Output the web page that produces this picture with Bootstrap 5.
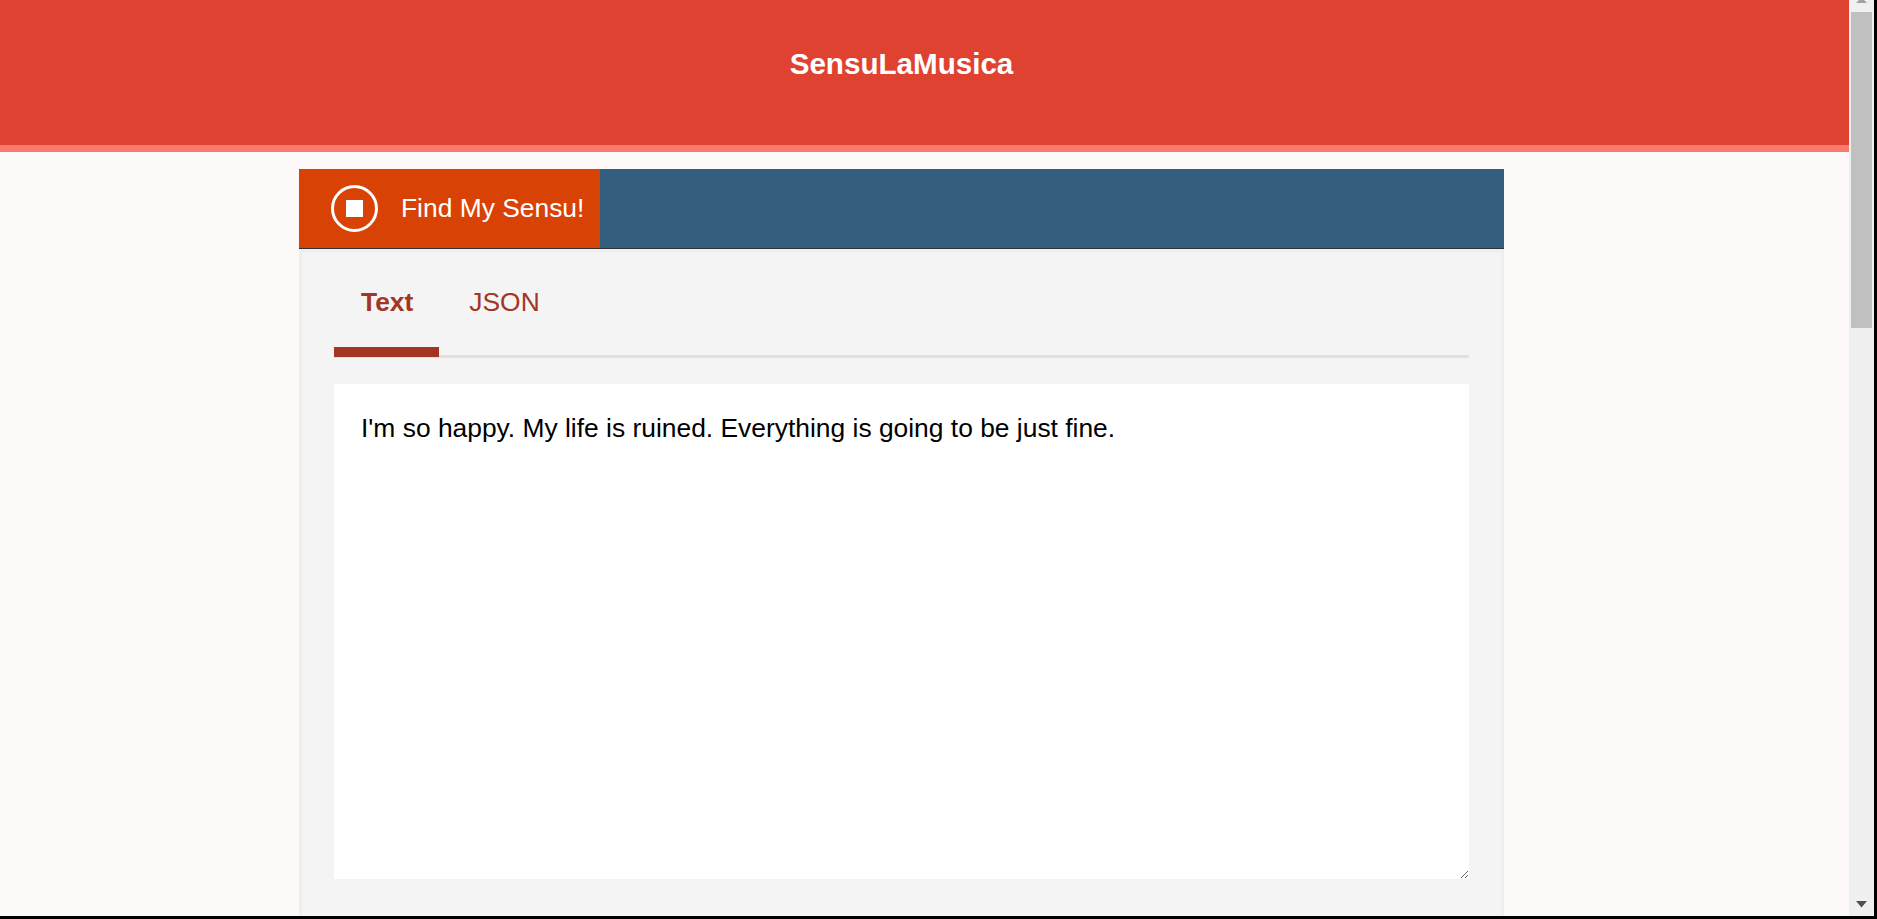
<!DOCTYPE html>
<html lang="en">

<head>
  <meta charset="UTF-8" />
  <title>SensuLaMusica</title>
  <link href="https://cdn.jsdelivr.net/npm/bootstrap@5.3.2/dist/css/bootstrap.min.css" rel="stylesheet" />
  <style>
    html,
    body {
      height: 100%;
      overflow: hidden;
    }

    body {
      background: #000;
      font-family: "Liberation Sans", Arial, sans-serif;
    }

    .shot {
      height: 916px;
      width: 1874px;
    }

    .page {
      width: 1849px;
      background: #fdf9f8;
      overflow: hidden;
    }

    .page-head {
      width: 1849px;
      height: 152px;
      padding: 47px 46px 0 0;
      background: #e04232;
      border-bottom: 7px solid #f87a6c;
    }

    .page-head h1 {
      margin: 0;
      font-size: 29.6px;
      font-weight: 700;
      line-height: 34px;
      color: #fff;
      text-align: center;
    }

    .wrap {
      width: 1803px;
      padding-top: 17px;
    }

    .box {
      width: 1205px;
    }

    .run-bar {
      height: 80px;
      background: #335e80;
      border-bottom: 1px solid #333;
    }

    .run-btn {
      width: 301px;
      height: 79px;
      padding: 0 0 0 32px;
      gap: 23px;
      border: 0;
      border-radius: 0;
      background: #d84205;
      color: #fff;
      font-size: 26.4px;
    }

    .run-btn:hover,
    .run-btn:active {
      background: #d84205;
      color: #fff;
    }

    .panel {
      height: 700px;
      padding: 0 32px;
      background: #f4f4f4;
      border: 3px solid #eee;
    }

    .tabs {
      height: 106px;
      border-bottom: 3px solid #e0e0e0;
    }

    .tabs .nav-link {
      height: 105px;
      padding: 35px 26px 0 27px;
      border-radius: 0;
      font-size: 26.4px;
      line-height: 30px;
      color: #a33524;
    }

    .tabs .nav-link.active {
      font-weight: 700;
      border-bottom: 10px solid #a33524;
    }

    .tabs .nav-item + .nav-item {
      margin-left: 3px;
    }

    .input-text {
      display: block;
      height: 495px;
      margin-top: 26px;
      padding: 29px 27px;
      border: 0;
      border-radius: 0;
      font-size: 26.4px;
      line-height: 30px;
      color: #000;
    }

    .fake-scroll {
      width: 25px;
      padding: 0 2px;
      background: #f0f0f0;
    }

    .fake-scroll .thumb {
      height: 316px;
      margin-top: 9px;
      background: #c0c0c0;
    }

    .fake-scroll svg {
      display: block;
      margin: 0 auto;
    }
  </style>
</head>

<body>
  <div class="shot d-flex">
    <div class="page">
      <header class="page-head">
        <h1>SensuLaMusica</h1>
      </header>

      <div class="wrap">
        <div class="box mx-auto">
          <div class="run-bar">
            <button type="button" class="btn run-btn d-flex align-items-center">
              <svg width="47" height="47" viewBox="0 0 47 47" aria-hidden="true">
                <circle cx="23.5" cy="23.5" r="22" fill="none" stroke="#fff" stroke-width="3" />
                <rect x="15" y="15" width="17" height="17" fill="#fff" />
              </svg>
              <span>Find My Sensu!</span>
            </button>
          </div>

          <div class="panel">
            <ul class="nav tabs">
              <li class="nav-item"><a class="nav-link active" href="#">Text</a></li>
              <li class="nav-item"><a class="nav-link" href="#">JSON</a></li>
            </ul>
            <textarea class="form-control input-text">I'm so happy. My life is ruined. Everything is going to be just fine.</textarea>
          </div>
        </div>
      </div>
    </div>

    <!-- the browser's own scrollbar, the shot has it in the picture -->
    <div class="fake-scroll d-flex flex-column">
      <svg width="11" height="3" viewBox="0 0 11 3" aria-hidden="true">
        <path d="M0 3 3 0H8L11 3Z" fill="#a0a0a0" />
      </svg>
      <div class="thumb"></div>
      <svg class="mt-auto mb-2" width="11" height="7" viewBox="0 0 11 7" aria-hidden="true">
        <path d="M0 0H11L5.5 6.5Z" fill="#505050" />
      </svg>
    </div>
  </div>

  <script src="https://cdn.jsdelivr.net/npm/bootstrap@5.3.2/dist/js/bootstrap.bundle.min.js"></script>
</body>

</html>
